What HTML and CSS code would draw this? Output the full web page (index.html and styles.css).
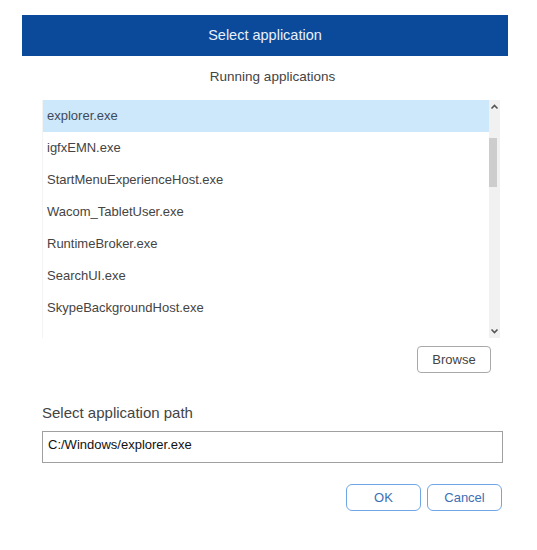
FILE: index.html
```html
<!DOCTYPE html>
<html lang="en">
<head>
    <meta charset="UTF-8">
    <title>Select application</title>
    <link rel="stylesheet" href="styles.css">
</head>
<body>
    <div class="dialog">
        <header class="dialog-header">Select application</header>
        <div class="dialog-body">
            <p class="subtitle">Running applications</p>
            <div class="app-list">
                <ul class="app-rows">
                    <li class="selected">explorer.exe</li>
                    <li>igfxEMN.exe</li>
                    <li>StartMenuExperienceHost.exe</li>
                    <li>Wacom_TabletUser.exe</li>
                    <li>RuntimeBroker.exe</li>
                    <li>SearchUI.exe</li>
                    <li>SkypeBackgroundHost.exe</li>
                </ul>
                <div class="scrollbar">
                    <svg class="arrow" width="11" height="14" viewBox="0 0 11 14"><path d="M2.5 8.5 L5.5 5.5 L8.5 8.5" fill="none" stroke="#555" stroke-width="1.6"/></svg>
                    <div class="track"><div class="thumb"></div></div>
                    <svg class="arrow" width="11" height="14" viewBox="0 0 11 14"><path d="M2.5 5.5 L5.5 8.5 L8.5 5.5" fill="none" stroke="#555" stroke-width="1.6"/></svg>
                </div>
            </div>
            <div class="browse-row">
                <button class="btn">Browse</button>
            </div>
            <label class="path-label" for="app-path">Select application path</label>
            <input type="text" id="app-path" class="path-input" value="C:/Windows/explorer.exe">
            <div class="actions">
                <button class="btn btn-blue">OK</button>
                <button class="btn btn-blue">Cancel</button>
            </div>
        </div>
    </div>
</body>
</html>
```

FILE: styles.css
```css
body {
    margin: 0;
    padding: 0;
    font-family: 'Liberation Sans', Arial, sans-serif;
    background-color: white;
    color: #444;
}
.dialog {
    width: 486px;
    margin: 15px 0 0 22px;
}
.dialog-header {
    height: 41px;
    line-height: 41px;
    background-color: #0b4a9a;
    color: #e8f0fb;
    font-size: 14.5px;
    text-align: center;
}
.dialog-body {
    padding: 0 5px 0 20px;
}
.subtitle {
    margin: 13px 0 0;
    font-size: 13.5px;
    line-height: 16px;
    text-align: center;
    color: #444;
}
.app-list {
    display: flex;
    height: 238px;
    width: 458px;
    margin-top: 15px;
    border-left: 1px solid #f4f4f4;
    box-sizing: border-box;
}
.app-rows {
    flex: 1;
    list-style: none;
    margin: 0;
    padding: 0;
}
.app-rows li {
    height: 32px;
    line-height: 32px;
    padding-left: 4px;
    font-size: 13px;
    color: #444;
}
.app-rows li.selected {
    background-color: #cde7fb;
    color: #3d4a5a;
}
.scrollbar {
    width: 11px;
    display: flex;
    flex-direction: column;
    background-color: #f1f1f1;
}
.arrow {
    display: block;
    flex: none;
}
.track {
    flex: 1;
    padding-top: 24px;
}
.thumb {
    width: 8px;
    height: 49px;
    background-color: #cdcdcd;
}
.browse-row {
    display: flex;
    justify-content: flex-end;
    padding-right: 12px;
    margin-top: 8px;
}
.btn {
    height: 27px;
    width: 74px;
    padding: 0;
    background-color: white;
    border: 1px solid #a9a9a9;
    border-radius: 4px;
    font-family: 'Liberation Sans', Arial, sans-serif;
    font-size: 13px;
    color: #444;
}
.path-label {
    display: block;
    margin-top: 31px;
    font-size: 15px;
    line-height: 18px;
    color: #444;
}
.path-input {
    display: block;
    box-sizing: border-box;
    width: 100%;
    height: 32px;
    margin-top: 9px;
    padding: 5px 5px 10px;
    border: 1px solid #a0a0a0;
    font-family: 'Liberation Sans', Arial, sans-serif;
    font-size: 13px;
    line-height: 15px;
    color: #111;
}
.actions {
    display: flex;
    justify-content: flex-end;
    gap: 6px;
    margin-top: 21px;
    padding-right: 1px;
}
.btn-blue {
    width: 75px;
    border-color: #6fa6e6;
    border-radius: 6px;
    color: #3c6fb3;
}
```
